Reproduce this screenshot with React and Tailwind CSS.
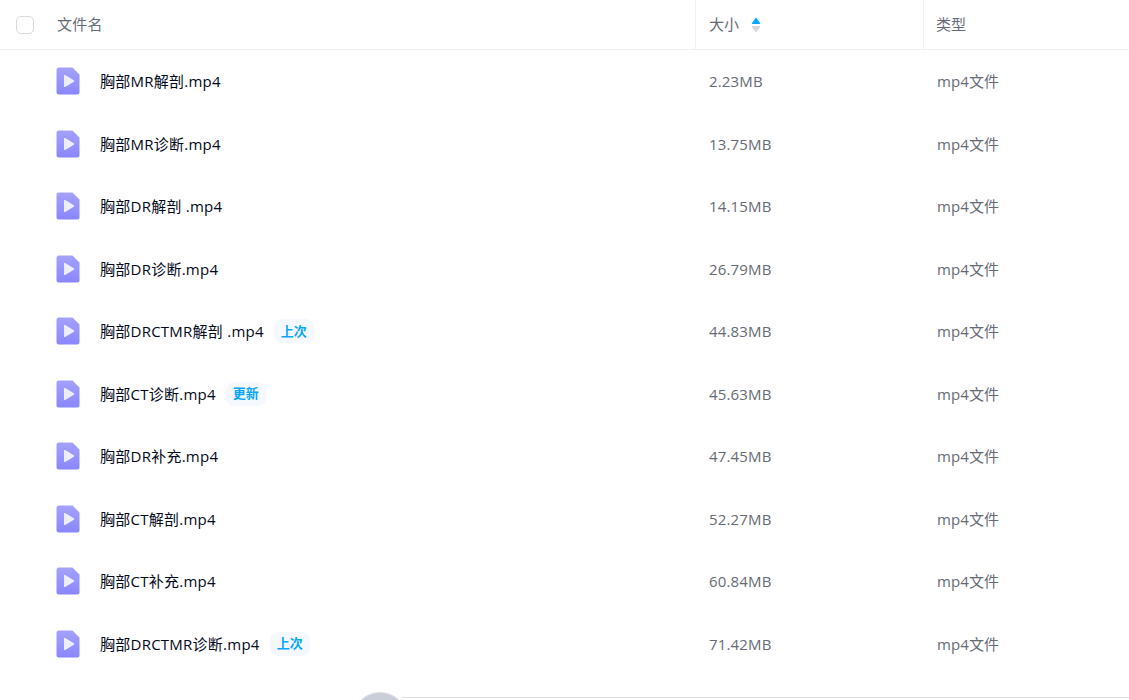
const files = [
  { name: '胸部MR解剖.mp4', size: '2.23MB' },
  { name: '胸部MR诊断.mp4', size: '13.75MB' },
  { name: '胸部DR解剖 .mp4', size: '14.15MB' },
  { name: '胸部DR诊断.mp4', size: '26.79MB' },
  { name: '胸部DRCTMR解剖 .mp4', size: '44.83MB', tag: '上次' },
  { name: '胸部CT诊断.mp4', size: '45.63MB', tag: '更新' },
  { name: '胸部DR补充.mp4', size: '47.45MB' },
  { name: '胸部CT解剖.mp4', size: '52.27MB' },
  { name: '胸部CT补充.mp4', size: '60.84MB' },
  { name: '胸部DRCTMR诊断.mp4', size: '71.42MB', tag: '上次' },
];

function VideoIcon() {
  return (
    <svg width="24" height="28" viewBox="0 0 24 28" className="shrink-0">
      <defs>
        <linearGradient id="fileGrad" x1="0" y1="0" x2="0" y2="1">
          <stop offset="0" stopColor="#a5a1fc" />
          <stop offset="1" stopColor="#8a86fd" />
        </linearGradient>
      </defs>
      <path d="M3 .5h13.5L23.5 7.5V25a2.5 2.5 0 0 1-2.5 2.5H3A2.5 2.5 0 0 1 .5 25V3A2.500 2.500 0 0 1 3 .5z" fill="url(#fileGrad)" />
      <path d="M8 8.800v10.400a.8.800 0 0 0 1.200.7l8.600-5.200a.8.800 0 0 0 0-1.400L9.200 8.100A.8.800 0 0 0 8 8.800z" fill="#eeedff" />
    </svg>
  );
}

function SortIcon() {
  return (
    <svg width="10" height="16" viewBox="0 0 10 16" className="ml-3">
      <path d="M5 .5 9 6a.6.6 0 0 1-.5 1h-7A.6.600 0 0 1 1 6z" fill="#06a7ff" />
      <path d="M5 15.500 9 10a.6.600 0 0 0-.5-1h-7a.6.600 0 0 0-.5 1z" fill="#d4d7de" />
    </svg>
  );
}

export default function App() {
  return (
    <div className="relative h-[700px] w-full overflow-hidden bg-white font-['Open_Sans','Noto_Sans_CJK_SC',sans-serif] text-[15px]">
      {/* header */}
      <div className="flex h-[50px] items-center border-b border-[#f0f0f2] text-[#666b75]">
        <div className="flex h-full w-[695px] items-center">
          <div className="ml-4 h-[18px] w-[18px] rounded-[5px] border border-[#d9dadd]" />
          <span className="ml-[23px] tracking-[0.2px]">文件名</span>
        </div>
        <div className="flex h-full w-[228px] items-center border-l border-[#f0f0f2] pl-[13px]">
          <span>大小</span>
          <SortIcon />
        </div>
        <div className="flex h-full flex-1 items-center border-l border-[#f0f0f2] pl-3">
          <span>类型</span>
        </div>
      </div>

      {/* rows */}
      {files.map((f) => (
        <div key={f.name} className="flex h-[62.5px] items-center">
          <div className="flex w-[696px] items-center pl-[56px]">
            <VideoIcon />
            <span className="ml-5 whitespace-pre tracking-[0.25px] text-[#03081a]">{f.name}</span>
            {f.tag && (
              <span className="ml-[10px] flex h-6 w-10 items-center justify-center rounded-lg bg-[#f5f9ff] text-[13px] font-semibold text-[#06a7ff]">
                {f.tag}
              </span>
            )}
          </div>
          <div className="w-[228px] pl-[13px] tracking-[0.15px] text-[#666b75]">{f.size}</div>
          <div className="flex-1 pl-[13px] tracking-[0.1px] text-[#666b75]">mp4文件</div>
        </div>
      ))}

      {/* cut-off floating ball at the bottom */}
      <div className="absolute left-[352px] top-[692px] h-14 w-14 rounded-full border border-[#e3dfe0] bg-[#c9ced8]" />
      <div className="absolute left-[402px] right-0 top-[697px] h-px bg-[#dcdde0]" />
    </div>
  );
}
